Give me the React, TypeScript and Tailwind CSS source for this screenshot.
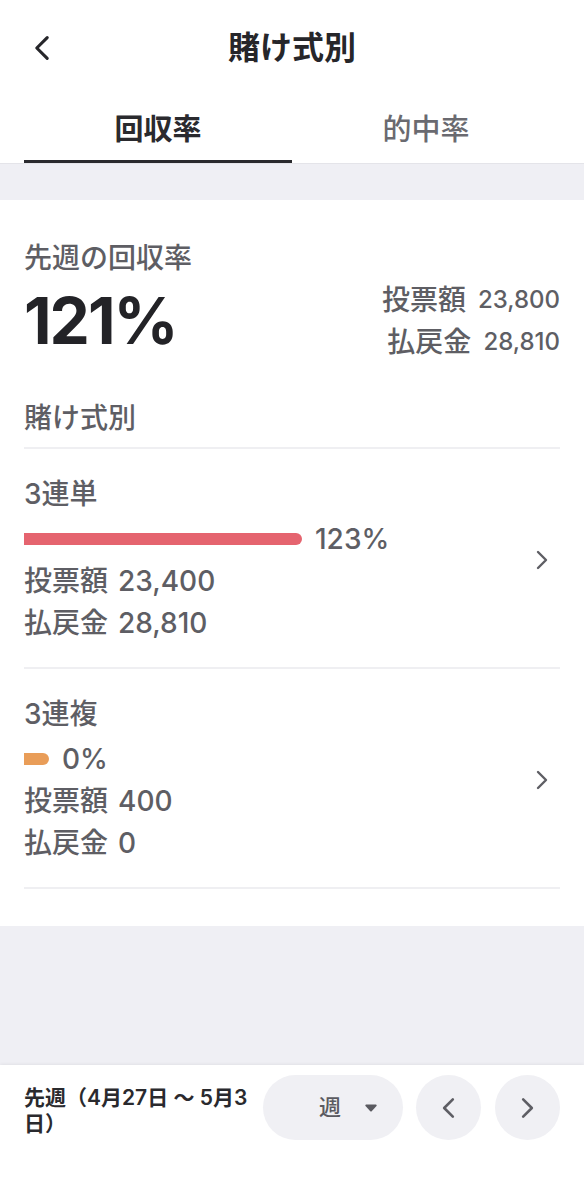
import type { ReactNode } from 'react';

const font = "font-['Inter','Noto_Sans_CJK_JP',sans-serif]";

function Chevron({ dir = 'right', className }: { dir?: 'left' | 'right'; className?: string }) {
  return (
    <svg viewBox="0 0 12 20" className={className} fill="none" stroke="currentColor" strokeWidth={2.4} strokeLinecap="round" strokeLinejoin="round">
      {dir === 'right' ? <polyline points="2,2 10,10 2,18" /> : <polyline points="10,2 2,10 10,18" />}
    </svg>
  );
}

function Amount({ label, value, small }: { label: string; value: string; small?: boolean }) {
  return (
    <div className="flex h-[42px] items-center leading-none">
      <span className="text-[28px] font-medium">{label}</span>
      <span className={small ? 'ml-[12px] text-[24px] font-medium' : 'ml-[10px] text-[28px] font-medium'}>{value}</span>
    </div>
  );
}

interface BetRowProps {
  name: string;
  barWidth: number;
  barColor: string;
  rate: string;
  bet: string;
  payout: string;
}

function BetRow({ name, barWidth, barColor, rate, bet, payout }: BetRowProps) {
  return (
    <div className="flex items-center border-b-2 border-[#efeff2] pt-[27px] pb-[23px]">
      <div className="flex flex-1 flex-col text-[#5e5e64]">
        <div className="h-[36px] text-[28px] font-medium leading-[36px]">{name}</div>
        <div className="mt-[6px] flex h-[42px] items-center">
          <div className={`h-[12px] rounded-r-full ${barColor}`} style={{ width: barWidth }} />
          <span className="ml-[13px] text-[28px] font-medium leading-none">{rate}</span>
        </div>
        <Amount label="投票額" value={bet} />
        <Amount label="払戻金" value={payout} />
      </div>
      <Chevron className="mr-[12px] h-[20px] w-[12px] text-[#5e5e64]" />
    </div>
  );
}

function RoundButton({ children, className }: { children: ReactNode; className?: string }) {
  return (
    <button className={`flex h-[65px] items-center rounded-full bg-[#f0f0f4] text-[#5e5e64] ${className ?? ''}`}>
      {children}
    </button>
  );
}

export default function App() {
  return (
    <div className={`flex h-[1200px] w-[584px] flex-col bg-[#efeff4] ${font}`}>
      {/* nav */}
      <div className="bg-white">
        <div className="grid h-[96px] grid-cols-[1fr_auto_1fr] items-center px-[34px]">
          <Chevron dir="left" className="h-[26px] w-[16px] text-[#26262a]" />
          <h1 className="text-[32px] font-semibold text-[#26262a]">賭け式別</h1>
          <div />
        </div>
        <div className="flex h-[68px] border-b border-[#e4e4e9] px-[24px]">
          <div className="flex flex-1 items-center justify-center border-b-[3px] border-[#2a2a2e] pt-[3px] text-[29px] font-semibold text-[#2a2a2e]">
            回収率
          </div>
          <div className="flex flex-1 items-center justify-center text-[29px] font-medium text-[#6a6a70]">
            的中率
          </div>
        </div>
      </div>

      {/* card */}
      <div className="mt-[36px] bg-white px-[24px] pt-[40px] pb-[37px]">
        <div className="h-[36px] text-[28px] font-medium leading-[36px] text-[#5e5e64]">先週の回収率</div>
        <div className="mt-[3px] flex items-center justify-between">
          <div className="text-[64px] font-bold leading-none tracking-[-2px] text-[#232327]">121%</div>
          <div className="flex flex-col items-end text-[#5e5e64]">
            <Amount label="投票額" value="23,800" small />
            <Amount label="払戻金" value="28,810" small />
          </div>
        </div>
        <div className="mt-[37px] h-[49px] border-b-2 border-[#efeff2] text-[28px] font-medium leading-[36px] text-[#5e5e64]">
          賭け式別
        </div>
        <BetRow name="3連単" barWidth={278} barColor="bg-[#e5646f]" rate="123%" bet="23,400" payout="28,810" />
        <BetRow name="3連複" barWidth={25} barColor="bg-[#e99d58]" rate="0%" bet="400" payout="0" />
      </div>

      <div className="flex-1" />

      {/* bottom bar */}
      <div className="flex h-[135px] items-start bg-white px-[24px] pt-[10px] shadow-[0_-1px_3px_rgba(0,0,0,0.06)]">
        <div className="mt-[10px] w-[228px] text-[21px] font-semibold leading-[26px] text-[#2a2a2e]">
          先週（4月27日 〜 5月3日）
        </div>
        <div className="ml-[12px] flex items-center">
          <RoundButton className="w-[140px] gap-[24px] pl-[56px]">
            <span className="text-[22px] font-medium text-[#5a5a60]">週</span>
            <svg viewBox="0 0 12 8" className="h-[8px] w-[12px] text-[#5a5a60]" fill="currentColor">
              <path d="M1.2 0.5h9.6c0.8 0 1.2 0.9 0.7 1.5L6.7 7.2c-0.4 0.4-1 0.4-1.4 0L0.5 2C0 1.4 0.4 0.5 1.2 0.5z" />
            </svg>
          </RoundButton>
          <RoundButton className="ml-[13px] w-[65px] justify-center">
            <Chevron dir="left" className="h-[22px] w-[13px]" />
          </RoundButton>
          <RoundButton className="ml-[14px] w-[65px] justify-center">
            <Chevron className="h-[22px] w-[13px]" />
          </RoundButton>
        </div>
      </div>
    </div>
  );
}
